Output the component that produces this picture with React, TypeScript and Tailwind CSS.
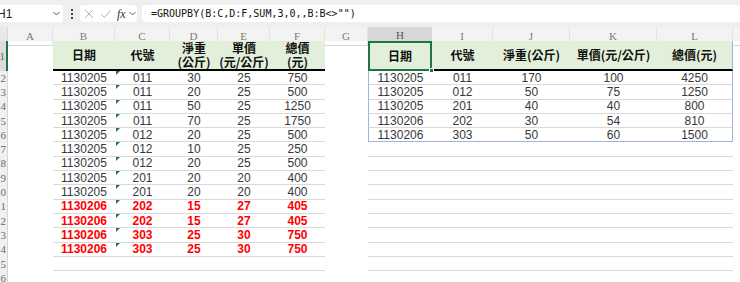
import React from 'react';

const GRID =
  'grid grid-cols-[8px_45px_62px_55px_48px_52px_55px_43px_64px_61px_77px_87px_76px_1fr]';

const LETTERS = ['A', 'B', 'C', 'D', 'E', 'F', 'G', 'H', 'I', 'J', 'K', 'L'];

const source: string[][] = [
  ['1130205', '011', '30', '25', '750'],
  ['1130205', '011', '20', '25', '500'],
  ['1130205', '011', '50', '25', '1250'],
  ['1130205', '011', '70', '25', '1750'],
  ['1130205', '012', '20', '25', '500'],
  ['1130205', '012', '10', '25', '250'],
  ['1130205', '012', '20', '25', '500'],
  ['1130205', '201', '20', '20', '400'],
  ['1130205', '201', '20', '20', '400'],
  ['1130206', '202', '15', '27', '405'],
  ['1130206', '202', '15', '27', '405'],
  ['1130206', '303', '25', '30', '750'],
  ['1130206', '303', '25', '30', '750'],
];

const grouped: string[][] = [
  ['1130205', '011', '170', '100', '4250'],
  ['1130205', '012', '50', '75', '1250'],
  ['1130205', '201', '40', '40', '800'],
  ['1130206', '202', '30', '54', '810'],
  ['1130206', '303', '50', '60', '1500'],
];

const FormulaBar = () => (
  <div className="h-[27px] bg-[#efefef] flex items-center relative">
    <div className="w-[63px] h-[17px] bg-white rounded-r-[3px] flex items-center overflow-hidden">
      <span className="ml-[-3px] text-[12px] text-[#222] font-['Liberation_Sans',sans-serif]">H1</span>
      <svg className="ml-auto mr-[2px]" width="9" height="9" viewBox="0 0 9 9">
        <path d="M1.5 3 L4.5 6 L7.5 3" fill="none" stroke="#555" strokeWidth="1" />
      </svg>
    </div>
    <div className="w-[17px] flex flex-col items-center gap-[2px]">
      <span className="w-[2px] h-[2px] bg-[#444]" />
      <span className="w-[2px] h-[2px] bg-[#444]" />
      <span className="w-[2px] h-[2px] bg-[#444]" />
    </div>
    <div className="w-[57px] h-[17px] bg-white rounded-[3px] flex items-center">
      <svg className="ml-[3px]" width="12" height="12" viewBox="0 0 12 12">
        <path d="M2 2 L10 10 M10 2 L2 10" stroke="#b0b0b0" strokeWidth="1" fill="none" />
      </svg>
      <svg className="ml-[5px]" width="12" height="12" viewBox="0 0 12 12">
        <path d="M1.5 6.5 L4.5 9.5 L10.5 2.5" stroke="#b0b0b0" strokeWidth="1" fill="none" />
      </svg>
      <span className="ml-[5px] italic text-[12px] leading-none text-[#333] font-['Liberation_Serif',serif]">fx</span>
      <svg className="ml-[2px]" width="9" height="9" viewBox="0 0 9 9">
        <path d="M1.5 3 L4.5 6 L7.5 3" fill="none" stroke="#666" strokeWidth="1" />
      </svg>
    </div>
    <div className="ml-[5px] flex-1 h-[17px] bg-white rounded-l-[3px] flex items-center pl-[9px]">
      <span className="text-[10px] text-[#111] font-['DejaVu_Sans_Mono',monospace]">
        =GROUPBY(B:C,D:F,SUM,3,0,,B:B&lt;&gt;"")
      </span>
    </div>
  </div>
);

const ColumnHeaders = () => (
  <div className={`${GRID} h-[14px] bg-[#f3f3f3] text-[11px] text-[#7a7a7a] font-['Liberation_Serif',serif]`}>
    <div className="bg-[#e9e9e9] border-r border-[#d6d6d6]" />
    {LETTERS.map((l) =>
      l === 'H' ? (
        <div key={l} className="bg-[#d8d8d8] border-b-2 border-[#217346] flex items-center justify-center text-[#555]">
          {l}
        </div>
      ) : (
        <div key={l} className="border-r border-[#e2e2e2] border-b border-b-[#d6d6d6] flex items-center justify-center">
          {l}
        </div>
      ),
    )}
    <div className="border-b border-[#d6d6d6]" />
  </div>
);

const RowNum = ({ n, active }: { n: number; active?: boolean }) => (
  <div
    className={`overflow-hidden flex justify-end items-center pr-[1px] text-[11px] text-[#6a6a6a] font-['Liberation_Serif',serif] ${
      active ? 'bg-[#dcdcdc] border-r-2 border-[#217346]' : 'bg-[#f0f0f0] border-r border-[#d6d6d6]'
    }`}
  >
    {n}
  </div>
);

const HeaderRow = () => {
  const cell = "bg-[#e2efda] border-b-2 border-black flex items-center justify-center text-center font-bold text-[12px] leading-[14px] text-[#111]";
  return (
    <div className={`${GRID} h-[30px] font-['Noto_Sans_CJK_TC',sans-serif]`}>
      <RowNum n={1} active />
      <div />
      <div className={cell}>日期</div>
      <div className={cell}>代號</div>
      <div className={cell}>淨重<br />(公斤)</div>
      <div className={cell}>單價<br />(元/公斤)</div>
      <div className={cell}>總價<br />(元)</div>
      <div />
      <div className="bg-[#e2efda] border-2 border-[#217346] flex items-center justify-center font-bold text-[12px] text-[#111] relative">
        日期
        <span className="absolute right-[-4px] bottom-[-4px] w-[5px] h-[5px] bg-[#217346] border border-white" />
      </div>
      <div className={cell}>代號</div>
      <div className={cell}>淨重(公斤)</div>
      <div className={cell}>單價(元/公斤)</div>
      <div className={`${cell} border-r border-r-[#9db5de]`}>總價(元)</div>
      <div />
    </div>
  );
};

const DataRow = ({ n, left, right, red, lastRight }: {
  n: number;
  left?: string[] | 'empty';
  right?: string[] | 'empty';
  red?: boolean;
  lastRight?: boolean;
}) => {
  const textCls = red ? 'text-[#ff0000] font-bold' : 'text-[#383838]';
  const line = 'border-b border-[#d9d9d9]';
  return (
    <div className={`${GRID} h-[14.3px] text-[12px] leading-none font-['Liberation_Sans','Noto_Sans_CJK_TC',sans-serif]`}>
      <RowNum n={n} />
      <div />
      {left
        ? [0, 1, 2, 3, 4].map((i) => (
            <div key={i} className={`${line} ${textCls} flex items-center justify-center relative`}>
              {left !== 'empty' && left[i]}
              {left !== 'empty' && i === 1 && (
                <span className="absolute left-[1px] top-0 w-0 h-0 border-t-[4px] border-r-[4px] border-t-[#1e7a3c] border-r-transparent" />
              )}
            </div>
          ))
        : [0, 1, 2, 3, 4].map((i) => <div key={i} />)}
      <div />
      {right
        ? [0, 1, 2, 3, 4].map((i) => {
            const isData = right !== 'empty';
            const edge = isData
              ? `${i === 0 ? 'border-l border-l-[#9db5de]' : ''} ${i === 4 ? 'border-r border-r-[#9db5de]' : ''} ${
                  lastRight ? 'border-b border-[#9db5de]' : line
                }`
              : line;
            return (
              <div key={i} className={`${edge} text-[#383838] flex items-center justify-center`}>
                {isData && right[i]}
              </div>
            );
          })
        : [0, 1, 2, 3, 4].map((i) => <div key={i} />)}
      <div />
    </div>
  );
};

export default function App() {
  const rows = [];
  for (let r = 0; r < 15; r++) {
    const n = r + 2;
    const left = r < source.length ? source[r] : r === 13 ? 'empty' : undefined;
    const right = r < grouped.length ? grouped[r] : r < 14 ? 'empty' : undefined;
    rows.push(
      <DataRow
        key={n}
        n={n}
        left={left as string[] | 'empty' | undefined}
        right={right as string[] | 'empty' | undefined}
        red={r >= 9 && r < 13}
        lastRight={r === grouped.length - 1}
      />,
    );
  }
  return (
    <div className="w-[740px] h-[282px] overflow-hidden bg-white">
      <FormulaBar />
      <ColumnHeaders />
      <HeaderRow />
      {rows}
    </div>
  );
}
